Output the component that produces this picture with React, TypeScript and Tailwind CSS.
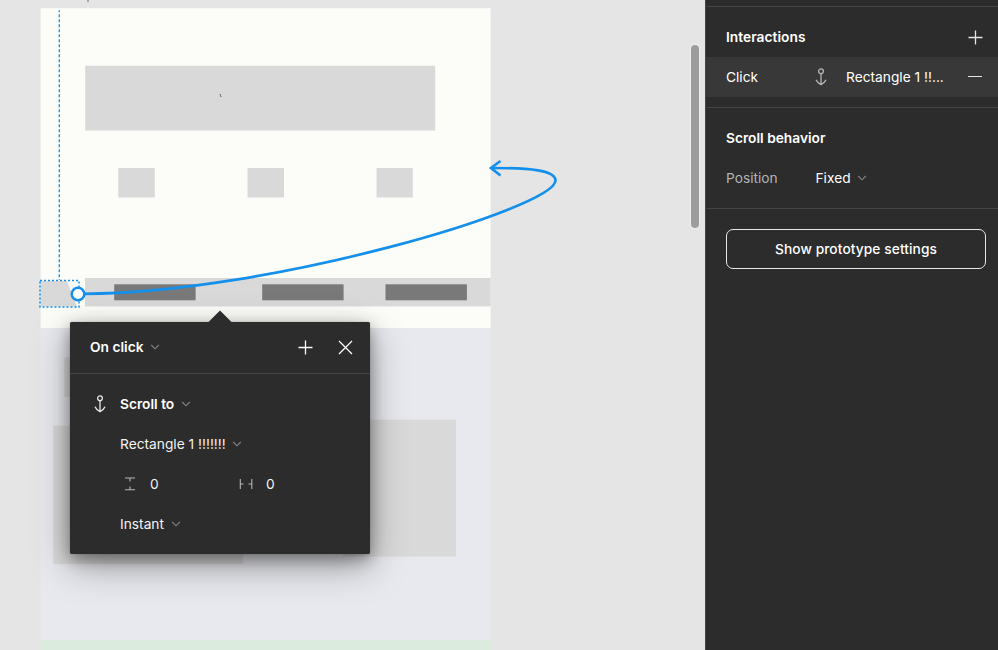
import type { ReactNode } from "react";

function Chevron({ className = "" }: { className?: string }) {
  return (
    <svg className={`shrink-0 ${className}`} width="10" height="8" viewBox="0 0 10 8" fill="none" stroke="#858585" strokeWidth="1.1">
      <path d="M1.2 2 5 5.8 8.8 2" />
    </svg>
  );
}

function Anchor({ color }: { color: string }) {
  return (
    <svg className="shrink-0" width="12" height="18" viewBox="0 0 12 18" fill="none" stroke={color} strokeWidth="1.3">
      <circle cx="6" cy="3.3" r="2.4" />
      <path d="M6 5.7V16.4M1 11.8C1.8 14 3.6 15.2 6 16.6 8.4 15.2 10.2 14 11 11.8" />
    </svg>
  );
}

function Plus({ color }: { color: string }) {
  return (
    <svg width="15" height="15" viewBox="0 0 15 15" stroke={color} strokeWidth="1.3">
      <path d="M7.5 .5V14.5M.5 7.5H14.5" />
    </svg>
  );
}

function Node({ className }: { className: string }) {
  return <div className={`absolute ${className}`} />;
}

function Canvas() {
  return (
    <main className="relative w-[705px] shrink-0 overflow-hidden bg-[#e5e5e5]">
      <Node className="left-[87px] top-0 h-[2px] w-[2px] bg-[#a8a8a8]" />
      <svg className="absolute left-0 top-0" width="705" height="650" fill="#d9d9d9">
        <rect x="40.6" y="8.2" width="450.1" height="319.8" fill="#fcfdf8" />
        <rect x="40.6" y="328" width="450.1" height="312" fill="#e8e9ee" />
        <rect x="40.6" y="640" width="450.1" height="10" fill="#dbecdf" />
        <rect x="85.2" y="65.7" width="350" height="64.8" />
        <rect x="118.3" y="168" width="36.5" height="29.5" />
        <rect x="247.5" y="168" width="36.5" height="29.5" />
        <rect x="376.5" y="168" width="36.3" height="29.5" />
        <rect x="85" y="278" width="405.6" height="28.4" />
        <g fill="#797979">
          <rect x="114.2" y="284.3" width="81.4" height="16" />
          <rect x="262.2" y="284.3" width="81.4" height="16" />
          <rect x="385.5" y="284.3" width="81.4" height="16" />
        </g>
        <rect x="64.2" y="357.2" width="100" height="39.8" />
        <rect x="53.2" y="425.7" width="190" height="138.5" />
        <rect x="343" y="419.7" width="113" height="137" />
        <path d="M40.5 281H67L77 306.5H40.5Z" />
        <path d="M219.5 94.5h1v2h1" stroke="#777" strokeWidth="1" fill="none" />
        <g fill="none" stroke="#148fec">
          <path d="M59.3 10.2V280" strokeWidth="1.3" strokeDasharray="3 2" strokeDashoffset="1" />
          <rect x="40" y="280.5" width="39" height="26.5" strokeWidth="1.5" strokeDasharray="2 2" />
          <path d="M84 293.8C270 293 555 208 555.5 180.5C555.5 170 530 168 491 168" strokeWidth="2.7" />
          <path d="M500.5 161 491 168 500.5 175.5" strokeWidth="2.7" />
          <circle cx="78" cy="294" r="6.3" fill="#fff" strokeWidth="2.5" />
        </g>
      </svg>
      <Node className="left-[691px] top-[45px] h-[183px] w-[8px] rounded-full bg-[#9d9d9d] ring-1 ring-[#efefef]" />
      <InteractionPopover />
    </main>
  );
}

function Row({ children }: { children: ReactNode }) {
  return <div className="flex h-10 items-center pl-[50px]">{children}</div>;
}

function InteractionPopover() {
  return (
    <section className="absolute left-[70px] top-[322px] h-[232px] w-[300px] rounded-[2px] bg-[#2c2c2c] text-white shadow-[0_12px_37px_rgba(0,0,0,0.35),0_5px_15px_rgba(0,0,0,0.35),0_0_1px_rgba(0,0,0,0.5)]">
      <svg className="absolute left-[138px] top-[-12px]" width="24" height="13" fill="#2c2c2c">
        <path d="M0 12.5 12 .5 24 12.5Z" />
      </svg>
      <header className="flex h-[52px] items-center border-b border-[#444] pb-px pl-5 pr-[17px]">
        <h2 className="font-semibold">On click</h2>
        <Chevron className="ml-[6px]" />
        <div className="ml-auto flex items-center gap-[25px]">
          <Plus color="#fff" />
          <svg width="15" height="15" viewBox="0 0 15 15" stroke="#fff" strokeWidth="1.3">
            <path d="M1 1 14 14M14 1 1 14" />
          </svg>
        </div>
      </header>
      <div className="pt-[10px] text-[#f2f2f2]">
        <div className="flex h-10 items-center pl-6">
          <Anchor color="#e8e8e8" />
          <span className="ml-[14px] font-semibold text-white">Scroll to</span>
          <Chevron className="ml-[7px]" />
        </div>
        <Row>
          <span>Rectangle 1 !!!!!!!</span>
          <Chevron className="ml-[6px]" />
        </Row>
        <Row>
          <div className="flex w-[116px] items-center pl-[5px]">
            <svg width="10" height="14" viewBox="0 0 10 14" stroke="#b5b5b5" strokeWidth="1.1" fill="none">
              <path d="M0 1H10M0 12.8H10M5 1V4.5M5 9.5V13" />
            </svg>
            <span className="ml-[15px]">0</span>
          </div>
          <div className="flex items-center pl-[3px]">
            <svg width="14" height="10" viewBox="0 0 14 10" stroke="#b5b5b5" strokeWidth="1.1" fill="none">
              <path d="M1.3 0V10M12.8 0V10M1 5H4.5M9.5 5H13" />
            </svg>
            <span className="ml-[13px]">0</span>
          </div>
        </Row>
        <Row>
          <span>Instant</span>
          <Chevron className="ml-[7px]" />
        </Row>
      </div>
    </section>
  );
}

function Sidebar() {
  return (
    <aside className="min-w-0 flex-1 border-l border-[#444] bg-[#2c2c2c] pt-[6px] text-white">
      <section className="border-y border-[#444] py-[10px]">
        <div className="flex h-10 items-center justify-between pl-5 pr-[15px]">
          <h2 className="font-semibold tracking-[0.04px]">Interactions</h2>
          <Plus color="#e6e6e6" />
        </div>
        <div className="flex h-10 items-center bg-[#383838] pl-5 pr-4">
          <span className="w-[89px]">Click</span>
          <Anchor color="#b5b5b5" />
          <span className="ml-[19px]">Rectangle 1 !!...</span>
          <div className="relative -top-px ml-auto h-px w-[14px] bg-[#e6e6e6]" />
        </div>
      </section>
      <section className="border-b border-[#444] py-[10px]">
        <h2 className="flex h-10 items-center pl-5 font-semibold">Scroll behavior</h2>
        <div className="flex h-10 items-center pl-5">
          <span className="w-[89.5px] text-[#b3b3b3]">Position</span>
          <span>Fixed</span>
          <Chevron className="ml-[6px]" />
        </div>
      </section>
      <div className="pl-5 pr-3 pt-5">
        <button className="h-10 w-full rounded-[7px] border border-[#e8e8e8] font-[550] tracking-[0.08px]">Show prototype settings</button>
      </div>
    </aside>
  );
}

export default function App() {
  return (
    <div className="flex h-[650px] w-[998px] overflow-hidden whitespace-nowrap font-['Inter','Liberation_Sans',sans-serif] text-[13.75px] font-[430] leading-5">
      <Canvas />
      <Sidebar />
    </div>
  );
}
